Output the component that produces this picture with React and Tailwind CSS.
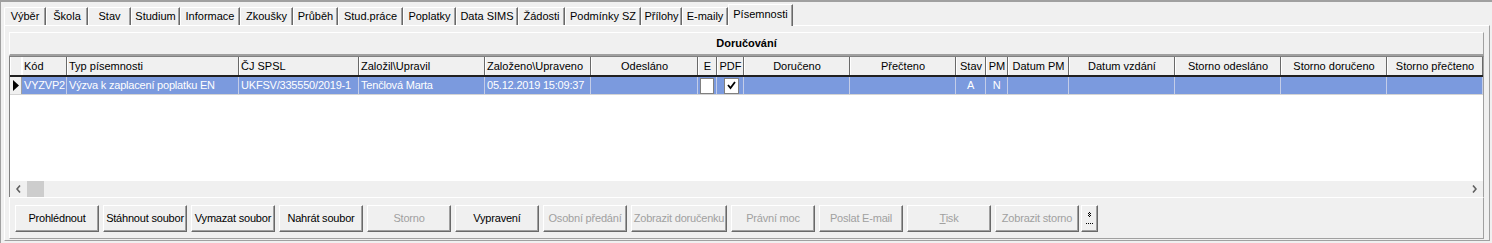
import React from 'react';

const tabs = [
	['Výběr', 42],
	['Škola', 42],
	['Stav', 43],
	['Studium', 49],
	['Informace', 60],
	['Zkoušky', 53],
	['Průběh', 45],
	['Stud.práce', 65],
	['Poplatky', 53],
	['Data SIMS', 62],
	['Žádosti', 47],
	['Podmínky SZ', 76],
	['Přílohy', 41],
	['E-maily', 46],
];

// [title, width, align, value]
const cols = [
	['Kód', 45, 'left', 'VYZVP2'],
	['Typ písemnosti', 172, 'left', 'Výzva k zaplacení poplatku EN'],
	['ČJ SPSL', 120, 'left', 'UKFSV/335550/2019-1'],
	['Založil\\Upravil', 126, 'left', 'Tenčlová Marta'],
	['Založeno\\Upraveno', 106, 'left', '05.12.2019 15:09:37'],
	['Odesláno', 107, 'center', ''],
	['E', 19, 'center', 'box'],
	['PDF', 27, 'center', 'check'],
	['Doručeno', 106, 'center', ''],
	['Přečteno', 106, 'center', ''],
	['Stav', 30, 'center', 'A'],
	['PM', 22, 'center', 'N'],
	['Datum PM', 61, 'center', ''],
	['Datum vzdání', 106, 'center', ''],
	['Storno odesláno', 106, 'center', ''],
	['Storno doručeno', 106, 'center', ''],
	['Storno přečteno', 96, 'center', ''],
];

const buttons = [
	['Prohlédnout', 84, true],
	['Stáhnout soubor', 84, true],
	['Vymazat soubor', 84, true],
	['Nahrát soubor', 84, true],
	['Storno', 84, false],
	['Vypravení', 84, true],
	['Osobní předání', 84, false],
	['Zobrazit doručenku', 96, false],
	['Právní moc', 84, false],
	['Poslat E-mail', 84, false],
	['Tisk', 84, false],
	['Zobrazit storno', 84, false],
];

function Btn({label, width, enabled}) {
	return (
		<div
			style={{width}}
			className={`h-[27px] shrink-0 flex items-center justify-center whitespace-nowrap tracking-[-0.2px] border border-t-white border-l-white border-r-[#696969] border-b-[#696969] shadow-[inset_-1px_-1px_0_#a0a0a0] bg-[#f0f0f0] ${enabled ? 'text-black' : 'text-[#a0a0a0]'}`}>
			{label === 'Tisk' ? (
				<span>
					<span className="underline">T</span>isk
				</span>
			) : (
				label
			)}
		</div>
	);
}

function Cell({col}) {
	const [, w, align, v] = col;
	return (
		<div
			style={{width: w}}
			className={`h-full shrink-0 border-r border-[#c4cde8] flex items-center px-[2px] whitespace-nowrap overflow-hidden tracking-[-0.2px] ${align === 'center' ? 'justify-center' : ''}`}>
			{v === 'box' && <div className="w-[15px] h-[16px] bg-white border border-[#808080]" />}
			{v === 'check' && (
				<div className="w-[15px] h-[16px] bg-white border border-[#808080] flex items-center justify-center ml-[3px]">
					<svg width="9" height="9" viewBox="0 0 9 9">
						<path d="M1 4 L3.5 7 L8 1" stroke="#000" strokeWidth="1.8" fill="none" />
					</svg>
				</div>
			)}
			{v !== 'box' && v !== 'check' && v}
		</div>
	);
}

export default function App() {
	return (
		<div className="w-[1492px] h-[243px] bg-[#f0f0f0] border-t-2 border-l border-[#a0a0a0] overflow-hidden text-[11px] text-black font-['Liberation_Sans',Arial,sans-serif] leading-none">
			{/* tabs */}
			<div className="flex items-end h-[23px] pl-[3px]">
				{tabs.map(([t, w]) => (
					<div
						key={t}
						style={{width: w}}
						className="h-[18px] shrink-0 flex items-center justify-center whitespace-nowrap border-t border-l border-white border-r border-r-[#696969] shadow-[inset_-1px_0_0_#a0a0a0] rounded-tl-[2px]">
						{t}
					</div>
				))}
				<div className="relative z-10 -mb-px w-[65px] h-[22px] shrink-0 flex items-start pt-[4px] justify-center bg-[#f0f0f0] border-t border-l border-white border-r border-r-[#696969] shadow-[inset_-1px_0_0_#a0a0a0]">
					Písemnosti
				</div>
			</div>

			{/* tab page */}
			<div className="ml-[3px] w-[1486px] h-[216px] border-t border-l border-white border-r border-b border-r-[#a0a0a0] border-b-[#a0a0a0] pt-[6px] pl-[4px]">
				<div className="w-[1475px]">
					<div className="h-[24px] flex items-center justify-center font-bold border-t border-l border-white border-r border-b-2 border-r-[#a0a0a0] border-b-[#a0a0a0]">
						Doručování
					</div>

					{/* grid */}
					<div className="h-[141px] border-t border-l border-[#808080] border-r border-r-[#a0a0a0] flex flex-col">
						<div className="flex h-[18px] bg-[#f0f0f0]">
							<div className="w-[12px] h-full shrink-0 border-l border-white border-r border-[#696969]" />
							{cols.map(([t, w, align]) => (
								<div
									key={t}
									style={{width: w}}
									className={`h-full shrink-0 flex items-center whitespace-nowrap overflow-hidden border-l border-white border-r border-r-[#696969] px-[1px] ${align === 'center' ? 'justify-center' : ''}`}>
									{t}
								</div>
							))}
						</div>
						<div className="h-[2px] bg-[#202020]" />
						<div className="flex h-[17px]">
							<div className="w-[12px] h-full shrink-0 bg-[#f0f0f0] border-r border-[#a0a0a0] flex items-center justify-center">
								<svg width="6" height="11" viewBox="0 0 6 11">
									<path d="M0 0 L6 5.5 L0 11 Z" fill="#000" />
								</svg>
							</div>
							<div className="flex h-full bg-[#7b9ade] text-white">
								{cols.map((c) => (
									<Cell key={c[0]} col={c} />
								))}
							</div>
						</div>
						<div className="h-px bg-[#d4d4d4]" />
						<div className="flex-1 bg-white" />
						<div className="h-[16px] flex items-center bg-[#f0f0f0]">
							<div className="w-[17px] h-full flex items-center justify-center">
								<svg width="5" height="8" viewBox="0 0 5 8">
									<path d="M4 0.5 L1 4 L4 7.5" stroke="#606060" strokeWidth="1.6" fill="none" />
								</svg>
							</div>
							<div className="w-[17px] h-full bg-[#cdcdcd]" />
							<div className="flex-1" />
							<div className="w-[17px] h-full flex items-center justify-center">
								<svg width="5" height="8" viewBox="0 0 5 8">
									<path d="M1 0.5 L4 4 L1 7.5" stroke="#606060" strokeWidth="1.6" fill="none" />
								</svg>
							</div>
						</div>
					</div>

					{/* buttons */}
					<div className="h-[42px] border-t border-l border-white border-r border-b border-r-[#a0a0a0] border-b-[#a0a0a0] pt-[7px] pl-[5px] flex gap-[4px]">
						{buttons.map(([l, w, e]) => (
							<Btn key={l} label={l} width={w} enabled={e} />
						))}
						<div className="-ml-[2px] w-[17px] h-[27px] shrink-0 flex items-center justify-center border border-t-white border-l-white border-r-[#696969] border-b-[#696969] shadow-[inset_-1px_-1px_0_#a0a0a0]">
							<svg width="7" height="13" viewBox="0 0 7 13">
								<rect x="3" y="0" width="1" height="1" fill="#000" />
								<rect x="2" y="1" width="1" height="1" fill="#000" />
								<rect x="4" y="1" width="1" height="1" fill="#000" />
								<rect x="3" y="2" width="1" height="1" fill="#000" />
								<rect x="2" y="3" width="1" height="1" fill="#000" />
								<rect x="4" y="3" width="1" height="1" fill="#000" />
								<rect x="3" y="4" width="1" height="1" fill="#000" />
								<rect x="0" y="11" width="1" height="1" fill="#000" />
								<rect x="2" y="11" width="1" height="1" fill="#000" />
								<rect x="4" y="11" width="1" height="1" fill="#000" />
								<rect x="6" y="11" width="1" height="1" fill="#000" />
							</svg>
						</div>
					</div>
				</div>
			</div>
		</div>
	);
}
